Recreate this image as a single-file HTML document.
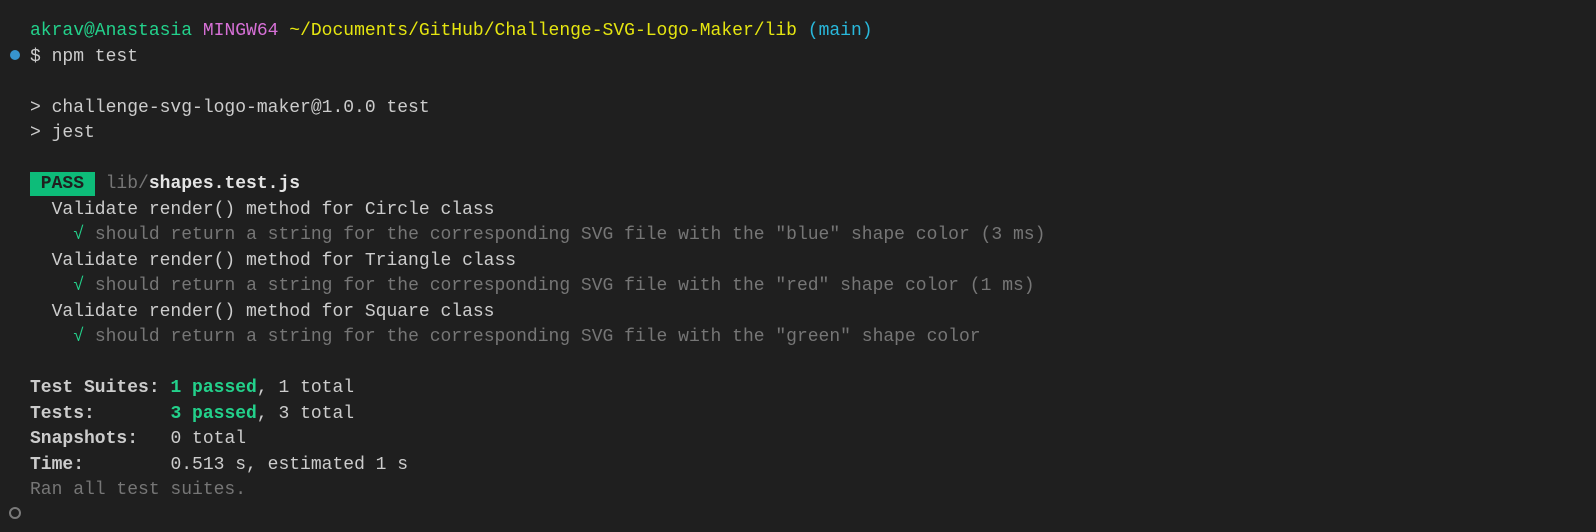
<!DOCTYPE html>
<html><head><meta charset="utf-8"><style>
html,body{margin:0;padding:0;background:#1f1f1f;width:1596px;height:532px;overflow:hidden;position:relative}
.l{position:absolute;left:30px;height:25px;font-family:"Liberation Mono","DejaVu Sans Mono",monospace;font-size:18px;line-height:20px;color:#cccccc;white-space:pre}
.g{color:#23d18b}.m{color:#d670d6}.y{color:#e5e510}.c{color:#29b8db}.d{color:#767676}.w{color:#e5e5e5;font-weight:bold}
.b{font-weight:bold}
.pass{background:#0dbc79;color:#1f1f1f;font-weight:bold;display:inline-block;line-height:24px;margin-top:-2px}
.dot{position:absolute;left:10px;top:50px;width:10px;height:10px;border-radius:50%;background:#3794ce}
.ring{position:absolute;left:9px;top:507px;width:8px;height:8px;border-radius:50%;border:2px solid #7a7a7a}
</style></head><body>
<div class="dot"></div><div class="ring"></div>
<div class="l" style="top:21px"><span class="g">akrav@Anastasia</span> <span class="m">MINGW64</span> <span class="y">~/Documents/GitHub/Challenge-SVG-Logo-Maker/lib</span> <span class="c">(main)</span></div>
<div class="l" style="top:46.5px">$ npm test</div>
<div class="l" style="top:97.5px">&gt; challenge-svg-logo-maker@1.0.0 test</div>
<div class="l" style="top:123px">&gt; jest</div>
<div class="l" style="top:174px"><span class="pass"> PASS </span> <span class="d">lib/</span><span class="w">shapes.test.js</span></div>
<div class="l" style="top:199.5px">  Validate render() method for Circle class</div>
<div class="l" style="top:225px">    <span class="g">√</span> <span class="d">should return a string for the corresponding SVG file with the "blue" shape color (3 ms)</span></div>
<div class="l" style="top:250.5px">  Validate render() method for Triangle class</div>
<div class="l" style="top:276px">    <span class="g">√</span> <span class="d">should return a string for the corresponding SVG file with the "red" shape color (1 ms)</span></div>
<div class="l" style="top:301.5px">  Validate render() method for Square class</div>
<div class="l" style="top:327px">    <span class="g">√</span> <span class="d">should return a string for the corresponding SVG file with the "green" shape color</span></div>
<div class="l" style="top:378px"><span class="b">Test Suites: </span><span class="g b">1 passed</span>, 1 total</div>
<div class="l" style="top:403.5px"><span class="b">Tests:       </span><span class="g b">3 passed</span>, 3 total</div>
<div class="l" style="top:429px"><span class="b">Snapshots:   </span>0 total</div>
<div class="l" style="top:454.5px"><span class="b">Time:        </span>0.513 s, estimated 1 s</div>
<div class="l" style="top:480px"><span class="d">Ran all test suites.</span></div>
</body></html>
